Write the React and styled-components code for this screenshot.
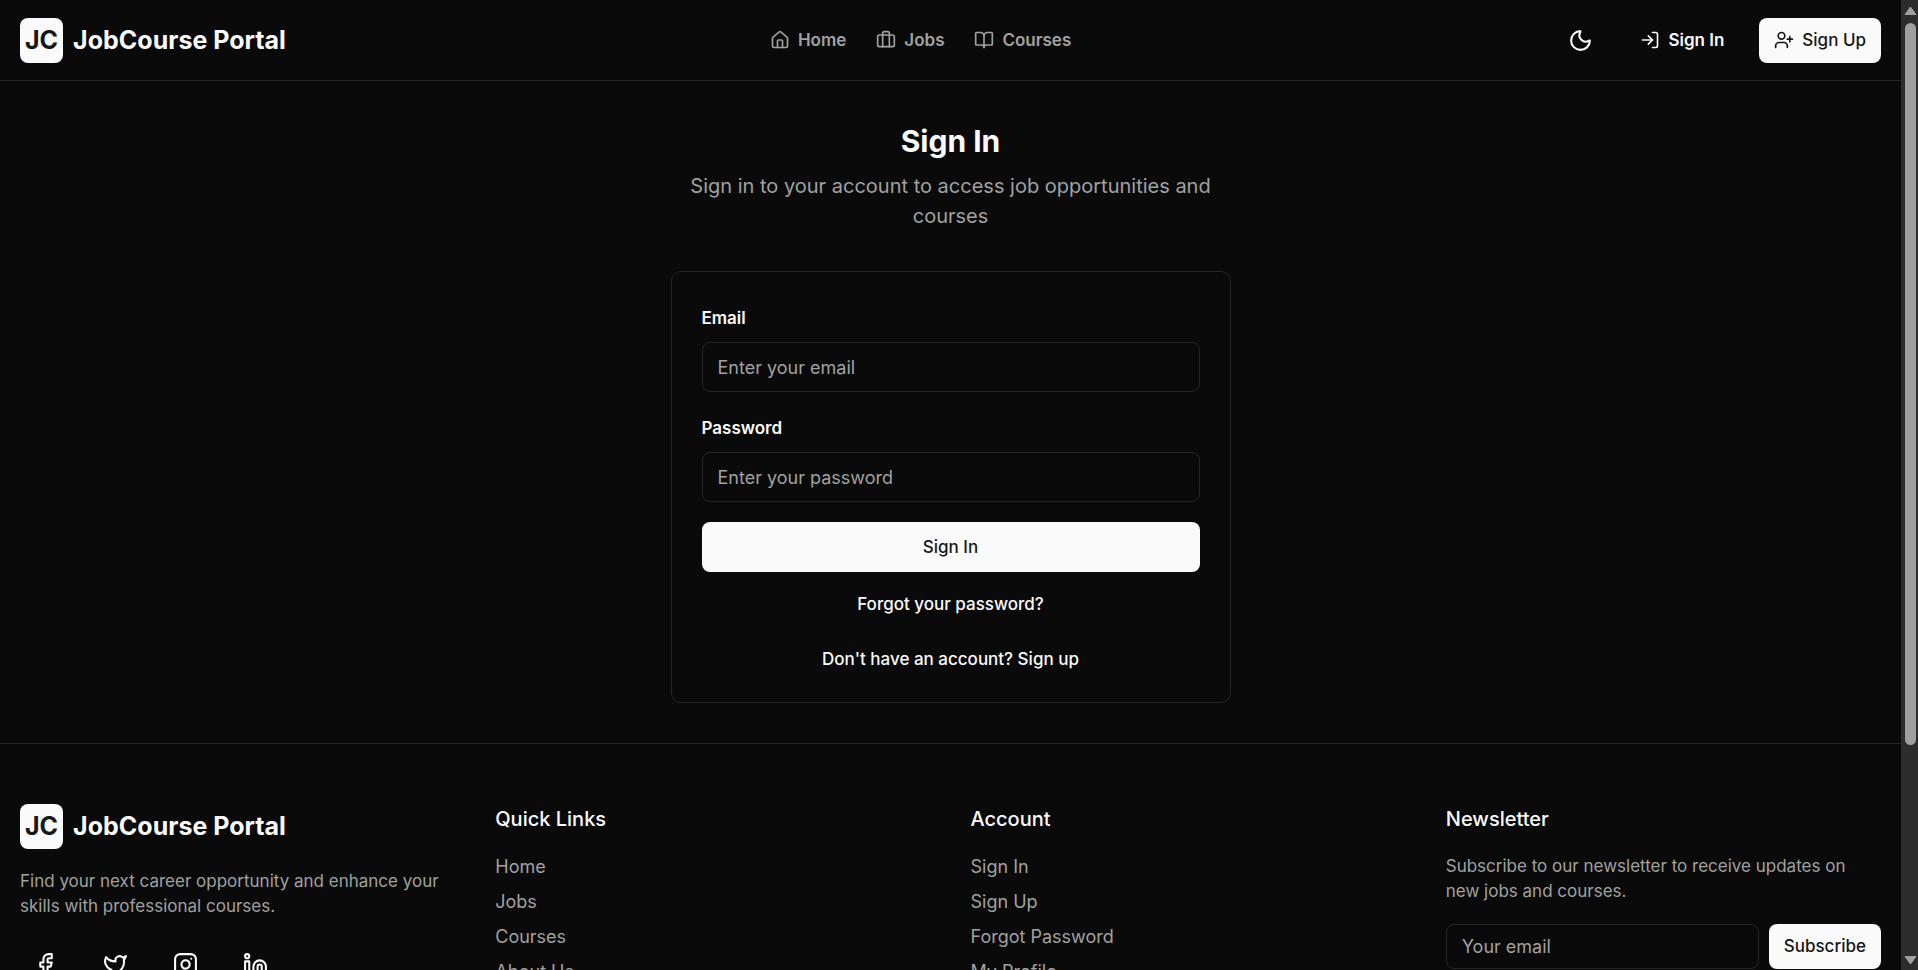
import { useState } from "react";
import styled, { createGlobalStyle, css } from "styled-components";
import {
  BookOpen,
  Briefcase,
  Facebook,
  House,
  Instagram,
  Linkedin,
  LogIn,
  Moon,
  Twitter,
  UserPlus,
} from "lucide-react";

const colors = {
  background: "#0a0a0a",
  foreground: "#fafafa",
  muted: "#a1a1a1",
  border: "#262626",
  primaryText: "#171717",
};

const navLinks = [
  { label: "Home", href: "#home", Icon: House },
  { label: "Jobs", href: "#jobs", Icon: Briefcase },
  { label: "Courses", href: "#courses", Icon: BookOpen },
];

const socialLinks = [
  { label: "Facebook", Icon: Facebook },
  { label: "Twitter", Icon: Twitter },
  { label: "Instagram", Icon: Instagram },
  { label: "LinkedIn", Icon: Linkedin },
];

const footerColumns = [
  { title: "Quick Links", links: ["Home", "Jobs", "Courses", "About Us"] },
  {
    title: "Account",
    links: ["Sign In", "Sign Up", "Forgot Password", "My Profile"],
  },
];

const GlobalStyle = createGlobalStyle`
  * {
    box-sizing: border-box;
    margin: 0;
    padding: 0;
  }

  body {
    background: ${colors.background};
    color: ${colors.foreground};
    font-family: Inter, "Liberation Sans", sans-serif;
    font-size: 18px;
    line-height: 25px;
  }

  a {
    color: inherit;
    text-decoration: none;
  }

  button,
  input {
    font: inherit;
  }
`;

const Shell = styled.div`
  display: flex;
  height: 100vh;
`;

const Page = styled.div`
  flex: 1;
  min-width: 0;
  overflow: hidden;
`;

const Header = styled.header`
  display: flex;
  align-items: center;
  justify-content: space-between;
  height: 81px;
  padding: 0 20px;
  border-bottom: 1px solid ${colors.border};
`;

const LogoLink = styled.a`
  display: flex;
  align-items: center;
  gap: 10px;
  font-size: 25px;
  font-weight: 700;
  line-height: 35px;
`;

const LogoMark = styled.span`
  padding: 5px;
  border-radius: 8px;
  background: ${colors.foreground};
  color: ${colors.primaryText};
`;

const Nav = styled.nav`
  display: flex;
  gap: 30px;
`;

const NavLink = styled.a`
  display: flex;
  align-items: center;
  gap: 8px;
  color: ${colors.muted};
  font-size: 17px;
  font-weight: 600;
`;

const Actions = styled.div`
  display: flex;
  align-items: center;
  gap: 20px;
`;

const buttonStyle = css`
  display: inline-flex;
  align-items: center;
  justify-content: center;
  gap: 8px;
  height: ${({ $tall }) => ($tall ? "50px" : "45px")};
  padding: 0 15px;
  border: none;
  border-radius: 8px;
  background: ${({ $ghost }) => ($ghost ? "transparent" : colors.foreground)};
  color: ${({ $ghost }) => ($ghost ? colors.foreground : colors.primaryText)};
  font-size: 17px;
  font-weight: ${({ $ghost }) => ($ghost ? 600 : 500)};
  white-space: nowrap;
  cursor: pointer;
`;

const Button = styled.button`
  ${buttonStyle}
`;

const ButtonLink = styled.a`
  ${buttonStyle}
`;

const IconButton = styled.button`
  display: inline-flex;
  align-items: center;
  justify-content: center;
  width: 50px;
  height: 50px;
  border: none;
  border-radius: 8px;
  background: transparent;
  color: ${colors.foreground};
  cursor: pointer;
`;

const Main = styled.main`
  max-width: 560px;
  margin: 0 auto;
  padding: 40px 0;
`;

const Intro = styled.div`
  margin-bottom: 40px;
  text-align: center;
`;

const Title = styled.h1`
  margin-bottom: 10px;
  font-size: 30px;
  font-weight: 700;
  line-height: 40px;
`;

const Subtitle = styled.p`
  color: ${colors.muted};
  font-size: 20px;
  line-height: 30px;
`;

const Card = styled.form`
  display: flex;
  flex-direction: column;
  gap: 20px;
  padding: 30px;
  border: 1px solid ${colors.border};
  border-radius: 10px;
`;

const Field = styled.div`
  display: flex;
  flex-direction: column;
  gap: 10px;
`;

const Label = styled.label`
  padding-top: 2px;
  font-size: 17px;
  font-weight: 600;
  line-height: 28px;
`;

const Input = styled.input`
  flex: 1;
  width: 100%;
  min-width: 0;
  min-height: ${({ $tall }) => ($tall ? "50px" : "45px")};
  padding: 0 15px;
  border: 1px solid ${colors.border};
  border-radius: 8px;
  background: transparent;
  color: ${colors.foreground};

  &::placeholder {
    color: ${colors.muted};
    opacity: 1;
  }
`;

const CardLinks = styled.div`
  display: flex;
  flex-direction: column;
  align-items: center;
  gap: 30px;
  font-size: 17px;
  font-weight: 500;
`;

const Footer = styled.footer`
  padding: 60px 20px;
  border-top: 1px solid ${colors.border};
`;

const FooterGrid = styled.div`
  display: grid;
  grid-template-columns: repeat(4, 1fr);
  gap: 40px;
`;

const Brand = styled.div`
  display: flex;
  flex-direction: column;
  align-items: flex-start;
  gap: 20px;
`;

const MutedText = styled.p`
  color: ${colors.muted};
  font-size: 17px;
`;

const Socials = styled.div`
  display: flex;
  gap: 20px;
`;

const FooterTitle = styled.h2`
  margin-bottom: 20px;
  font-size: 20px;
  font-weight: 500;
  line-height: 30px;
`;

const FooterList = styled.ul`
  display: flex;
  flex-direction: column;
  gap: 10px;
  color: ${colors.muted};
  list-style: none;
`;

const Subscribe = styled.form`
  display: flex;
  gap: 10px;
  margin-top: 20px;
`;

const ScrollTrack = styled.div`
  display: flex;
  flex-direction: column;
  align-items: center;
  width: 17px;
  padding: 6px 0 5px 2px;
  background: #2c2c2c;
  color: #9f9f9f;
`;

const ScrollRail = styled.div`
  flex: 1;
  width: 11px;
  margin: 7px 0;
`;

const ScrollThumb = styled.div`
  height: 78%;
  border-radius: 6px;
  background: currentColor;
`;

const Logo = () => (
  <LogoLink href="#home">
    <LogoMark>JC</LogoMark>
    JobCourse Portal
  </LogoLink>
);

const ScrollBar = () => (
  <ScrollTrack aria-hidden="true">
    <svg width="13" height="10" viewBox="0 0 13 10">
      <path
        d="M6.5 1 12 8.5H1Z"
        fill="currentColor"
        stroke="currentColor"
        strokeLinejoin="round"
      />
    </svg>
    <ScrollRail>
      <ScrollThumb />
    </ScrollRail>
    <svg width="13" height="10" viewBox="0 0 13 10">
      <path
        d="M6.5 9 12 1.5H1Z"
        fill="currentColor"
        stroke="currentColor"
        strokeLinejoin="round"
      />
    </svg>
  </ScrollTrack>
);

const App = () => {
  const [email, setEmail] = useState("");
  const [password, setPassword] = useState("");
  const [newsletterEmail, setNewsletterEmail] = useState("");

  const handleSubmit = (e) => {
    e.preventDefault();
  };

  return (
    <>
      <GlobalStyle />
      <Shell>
        <Page>
          <Header>
            <Logo />
            <Nav>
              {navLinks.map(({ label, href, Icon }) => (
                <NavLink key={label} href={href}>
                  <Icon size={20} />
                  {label}
                </NavLink>
              ))}
            </Nav>
            <Actions>
              <IconButton type="button" aria-label="Toggle theme">
                <Moon size={25} />
              </IconButton>
              <ButtonLink href="#signin" $ghost>
                <LogIn size={20} />
                Sign In
              </ButtonLink>
              <ButtonLink href="#signup">
                <UserPlus size={20} />
                Sign Up
              </ButtonLink>
            </Actions>
          </Header>

          <Main>
            <Intro>
              <Title>Sign In</Title>
              <Subtitle>
                Sign in to your account to access job opportunities and courses
              </Subtitle>
            </Intro>
            <Card onSubmit={handleSubmit}>
              <Field>
                <Label htmlFor="email">Email</Label>
                <Input
                  id="email"
                  type="email"
                  placeholder="Enter your email"
                  value={email}
                  onChange={(e) => setEmail(e.target.value)}
                  $tall
                />
              </Field>
              <Field>
                <Label htmlFor="password">Password</Label>
                <Input
                  id="password"
                  type="password"
                  placeholder="Enter your password"
                  value={password}
                  onChange={(e) => setPassword(e.target.value)}
                  $tall
                />
              </Field>
              <Button type="submit" $tall>
                Sign In
              </Button>
              <CardLinks>
                <a href="#forgot">Forgot your password?</a>
                <a href="#signup">Don't have an account? Sign up</a>
              </CardLinks>
            </Card>
          </Main>

          <Footer>
            <FooterGrid>
              <Brand>
                <Logo />
                <MutedText>
                  Find your next career opportunity and enhance your skills with
                  professional courses.
                </MutedText>
                <Socials>
                  {socialLinks.map(({ label, Icon }) => (
                    <IconButton key={label} type="button" aria-label={label}>
                      <Icon size={25} />
                    </IconButton>
                  ))}
                </Socials>
              </Brand>
              {footerColumns.map((column) => (
                <div key={column.title}>
                  <FooterTitle>{column.title}</FooterTitle>
                  <FooterList>
                    {column.links.map((link) => (
                      <li key={link}>
                        <a href="#home">{link}</a>
                      </li>
                    ))}
                  </FooterList>
                </div>
              ))}
              <div>
                <FooterTitle>Newsletter</FooterTitle>
                <MutedText>
                  Subscribe to our newsletter to receive updates on new jobs and
                  courses.
                </MutedText>
                <Subscribe onSubmit={handleSubmit}>
                  <Input
                    type="email"
                    aria-label="Your email"
                    placeholder="Your email"
                    value={newsletterEmail}
                    onChange={(e) => setNewsletterEmail(e.target.value)}
                  />
                  <Button type="submit">Subscribe</Button>
                </Subscribe>
              </div>
            </FooterGrid>
          </Footer>
        </Page>
        <ScrollBar />
      </Shell>
    </>
  );
};

export default App;
